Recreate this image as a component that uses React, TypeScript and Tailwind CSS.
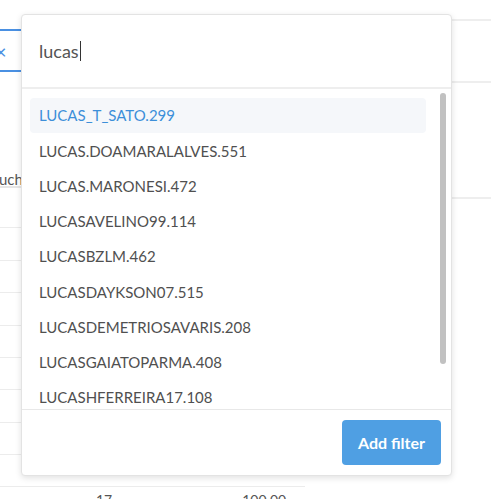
import React from "react";

const items = [
  "LUCAS_T_SATO.299",
  "LUCAS.DOAMARALALVES.551",
  "LUCAS.MARONESI.472",
  "LUCASAVELINO99.114",
  "LUCASBZLM.462",
  "LUCASDAYKSON07.515",
  "LUCASDEMETRIOSAVARIS.208",
  "LUCASGAIATOPARMA.408",
  "LUCASHFERREIRA17.108",
  "LUCASJ.MOURA.377",
];

const rowHeights = [40, 33, 32, 33, 32, 32, 33, 32, 32];

export default function App() {
  return (
    <div
      className="relative w-[491px] h-[499px] overflow-hidden bg-white"
      style={{ fontFamily: "Lato, 'Open Sans', sans-serif" }}
    >
      {/* background page */}
      <div className="flex w-full h-full overflow-hidden">
        <div className="w-[452px] flex flex-col">
          <div className="pt-[29px] shrink-0">
            <div className="ml-[-40px] w-[120px] h-[43px] border-2 border-[#4a90e2] rounded flex items-center">
              <span className="ml-[33px] text-[#4a90e2] text-[20px] leading-none">×</span>
            </div>
          </div>
          <div className="w-[305px] h-[116px] shrink-0 border-b-2 border-[#e6e6e6] flex items-end">
            <span className="text-[15px] text-[#555] leading-[14px] ml-[-1px]">uch</span>
          </div>
          {rowHeights.map((h, i) => (
            <div
              key={i}
              className="w-[305px] border-b border-[#ececec] shrink-0"
              style={{ height: h }}
            />
          ))}
          <div className="flex shrink-0 w-[305px] text-[14px] text-[#555] leading-[18px] pt-[4px]">
            <span className="ml-[96px]">17</span>
            <span className="ml-[130px]">100.00</span>
          </div>
        </div>
        <div className="flex-1 flex flex-col">
          <div className="h-[19px] shrink-0" />
          <div className="h-[62px] border-t-2 border-[#eeeeee] shrink-0" />
          <div className="h-[116px] border-t-2 border-[#eeeeee] shrink-0" />
          <div className="border-t-2 border-[#eeeeee]" />
        </div>
      </div>

      {/* popup overlay */}
      <div className="absolute left-[21px] top-[14px] w-[431px] h-[462px] bg-white border border-[#e3e3e3] rounded-[4px] shadow-[0_2px_6px_rgba(0,0,0,0.12)] flex flex-col">
        <div className="h-[74px] shrink-0 border-b-2 border-[#eeeeee] flex items-center pl-[17px]">
          <span className="text-[18px] text-[#555] leading-none">lucas</span>
          <span className="w-[1px] h-[20px] bg-[#333] ml-[1px]" />
        </div>
        <div className="h-[320px] shrink-0 flex overflow-hidden">
          <div className="flex-1 pl-[8px] pt-[9px] flex flex-col overflow-hidden">
            {items.map((it, i) => (
              <div
                key={it}
                className={
                  "h-[35.25px] shrink-0 flex items-center pl-[9px] rounded-[4px] text-[15px] " +
                  (i === 0 ? "bg-[#f5f7fa] text-[#3d8fd9]" : "text-[#505050]")
                }
              >
                {it}
              </div>
            ))}
          </div>
          <div className="w-[25px] shrink-0 pt-[4px] pl-[14px]">
            <div className="w-[6px] h-[271px] rounded-full bg-[#c1c1c1]" />
          </div>
        </div>
        <div className="flex-1 border-t border-[#e8e8e8] flex justify-end items-start pt-[10px] pr-[10px]">
          <button className="w-[99px] h-[45px] rounded-[4px] bg-[#4f9fe3] text-white font-bold text-[16px]">
            Add filter
          </button>
        </div>
      </div>
    </div>
  );
}
